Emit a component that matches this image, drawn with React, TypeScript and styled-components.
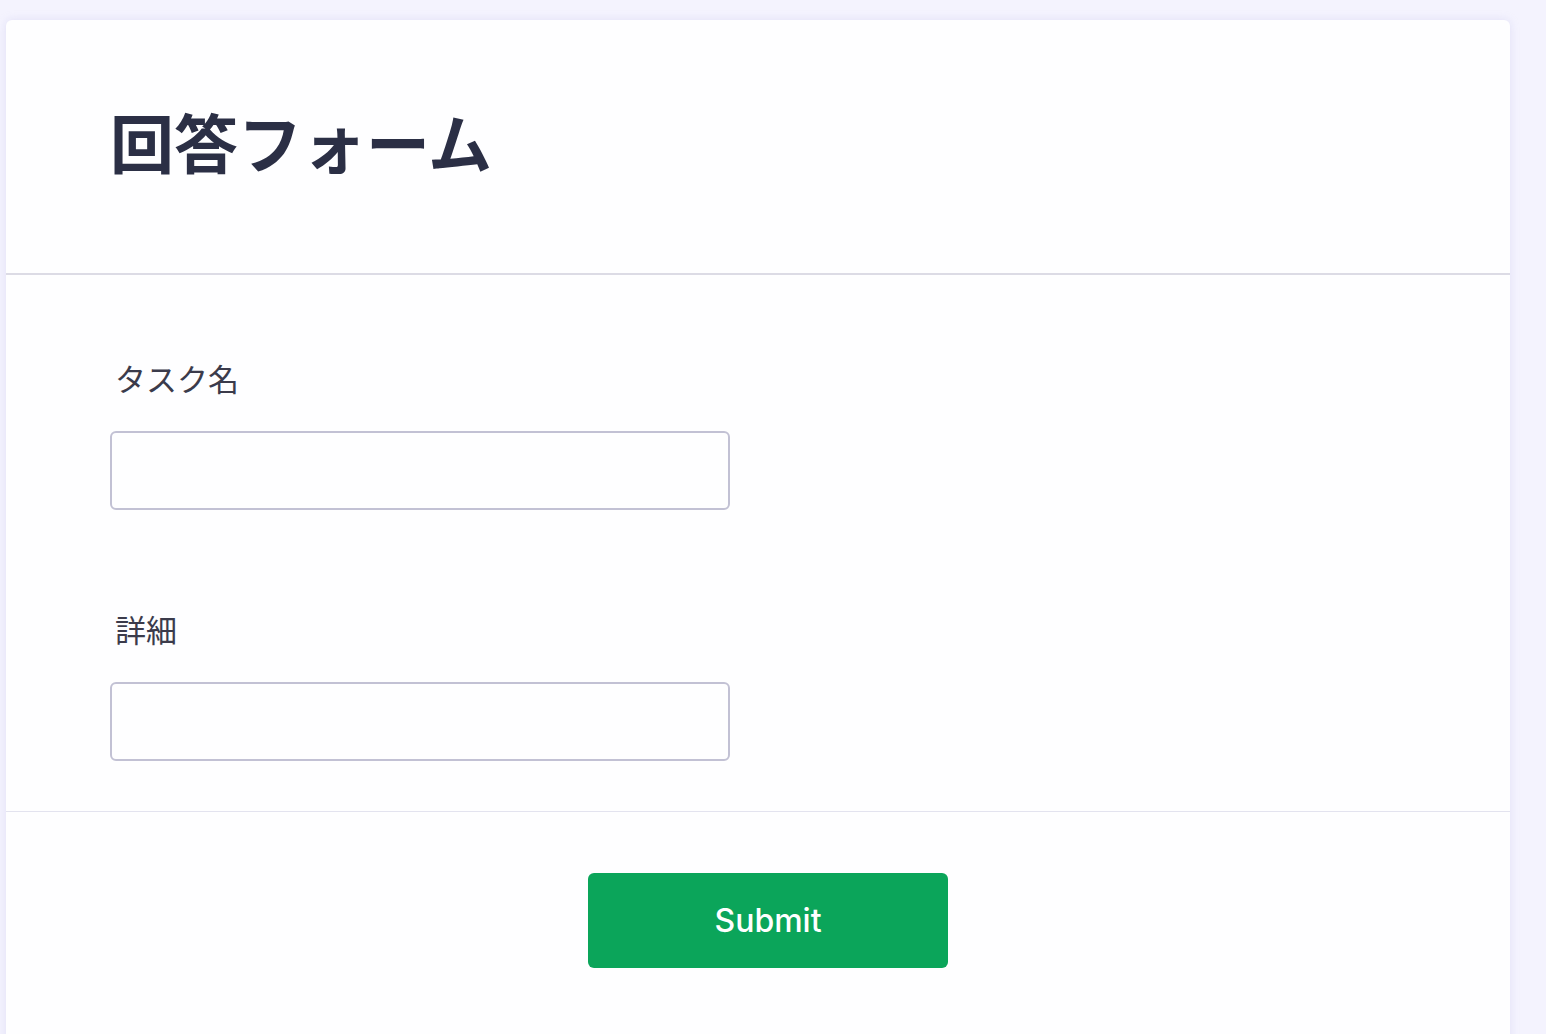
import React from 'react';
import styled, { createGlobalStyle } from 'styled-components';

const GlobalStyle = createGlobalStyle`
  html, body {
    margin: 0;
    padding: 0;
    background: #f4f3fe;
    font-family: Inter, 'Noto Sans CJK JP', sans-serif;
  }
`;

const Page = styled.div`
  padding: 20px 36px 0 6px;
  min-height: 1034px;
  box-sizing: border-box;
  overflow: hidden;
`;

const Card = styled.div`
  background: #fefeff;
  border-radius: 6px 6px 0 0;
  box-shadow: 0 0 8px rgba(190, 186, 230, 0.35);
`;

const Header = styled.div`
  height: 255px;
  box-sizing: border-box;
  display: flex;
  align-items: center;
  padding: 0 0 12px 104px;
  border-bottom: 2px solid #dcdbe5;
`;

const Title = styled.h1`
  margin: 0;
  font-family: 'Noto Sans CJK JP', sans-serif;
  font-size: 64px;
  font-weight: 700;
  line-height: 1.4;
  color: #2b2f45;
`;

const Body = styled.div`
  display: flex;
  flex-direction: column;
  gap: 96px;
  padding: 80px 104px 50px;
  border-bottom: 1px solid #e3e3ef;
`;

const Field = styled.div`
  display: flex;
  flex-direction: column;
  gap: 30px;
`;

const Label = styled.label`
  font-family: 'Noto Sans CJK JP', sans-serif;
  font-size: 31px;
  line-height: 46px;
  color: #3b3b4b;
  padding-left: 5px;
`;

const Input = styled.input`
  width: 620px;
  height: 79px;
  box-sizing: border-box;
  border: 2px solid #c2c1d4;
  border-radius: 6px;
  background: #fefeff;
  outline: none;
  font-size: 24px;
  padding: 0 16px;
`;

const Footer = styled.div`
  display: flex;
  justify-content: center;
  padding: 61px 0 80px 20px;
`;

const SubmitButton = styled.button`
  width: 360px;
  height: 95px;
  border: none;
  border-radius: 6px;
  background: #0ba55a;
  color: #fff;
  font-family: Inter, sans-serif;
  font-size: 32px;
  font-weight: 500;
  cursor: pointer;
`;

const App: React.FC = () => {
  return (
    <>
      <GlobalStyle />
      <Page>
        <Card>
          <Header>
            <Title>回答フォーム</Title>
          </Header>
          <Body>
            <Field>
              <Label>タスク名</Label>
              <Input type="text" />
            </Field>
            <Field>
              <Label>詳細</Label>
              <Input type="text" />
            </Field>
          </Body>
          <Footer>
            <SubmitButton type="submit">Submit</SubmitButton>
          </Footer>
        </Card>
      </Page>
    </>
  );
};

export default App;
